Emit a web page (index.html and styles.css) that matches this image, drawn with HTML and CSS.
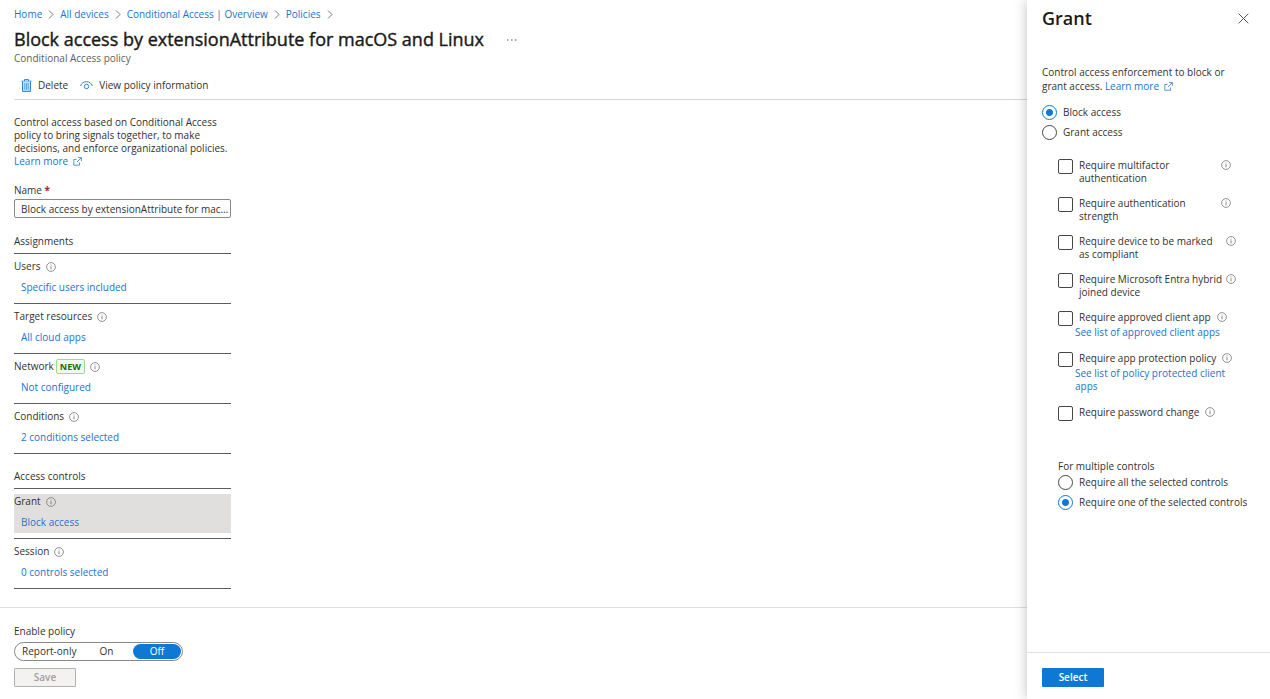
FILE: index.html
```html
<!DOCTYPE html>
<html lang="en">
<head>
<meta charset="utf-8">
<title>Block access by extensionAttribute for macOS and Linux</title>
<link rel="stylesheet" href="styles.css">
</head>
<body>
<svg class="sprite" aria-hidden="true">
  <symbol id="chevron" viewBox="0 0 6 9"><path d="M1 .5l4 4-4 4" fill="none" stroke="#777" stroke-width="1"/></symbol>
  <symbol id="info" viewBox="0 0 10 10"><circle cx="5" cy="5" r="4.4" fill="none" stroke="#777" stroke-width=".8"/><path d="M5 4.3v3M5 2.6v.9" stroke="#777" stroke-width=".9"/></symbol>
  <symbol id="external" viewBox="0 0 9 9"><path d="M3.500 2.500H.8v5.700H6.500V5.500M5 .6h3.400v3.400M8.400.6L4 5" fill="none" stroke="#2f7fd6" stroke-width=".8"/></symbol>
</svg>
<div class="page">
  <main class="main">
    <header class="header">
      <nav aria-label="Breadcrumb">
        <ol class="crumbs">
          <li><a href="#">Home</a><svg class="chevron"><use href="#chevron"/></svg></li>
          <li><a href="#">All devices</a><svg class="chevron"><use href="#chevron"/></svg></li>
          <li><a href="#">Conditional Access | Overview</a><svg class="chevron"><use href="#chevron"/></svg></li>
          <li><a href="#">Policies</a><svg class="chevron"><use href="#chevron"/></svg></li>
        </ol>
      </nav>
      <div class="title-row">
        <h1>Block access by extensionAttribute for macOS and Linux</h1>
        <button class="more" type="button" aria-label="More"><svg viewBox="0 0 10 2"><path d="M0 .5h1.500v1H0zM4 .5h1.500v1H4zM8 .5h1.500v1H8z" fill="#555"/></svg></button>
      </div>
      <p class="subtitle">Conditional Access policy</p>
      <div class="toolbar">
        <button type="button"><svg class="trash" viewBox="0 0 11 13"><path d="M.5 2.200h10M3.500 2V.6h4V2" fill="none" stroke="#2b84d6" stroke-width="1"/><path d="M1.500 2.500v9.900h8V2.500" fill="#c3e0f8" stroke="#2b84d6" stroke-width="1"/><path d="M3.800 4.200v6.500M5.500 4.200v6.500M7.200 4.200v6.500" stroke="#2b84d6" stroke-width=".7"/></svg>Delete</button>
        <button type="button"><svg class="eye" viewBox="0 0 13 9"><path d="M.6 5C1.500 2.200 3.800.7 6.500.7S11.500 2.200 12.400 5" fill="none" stroke="#2b84d6" stroke-width="1"/><circle cx="6.500" cy="5.500" r="2.200" fill="none" stroke="#2b84d6" stroke-width="1"/></svg>View policy information</button>
      </div>
    </header>

    <div class="content">
      <p class="intro">Control access based on Conditional Access policy to bring signals together, to make decisions, and enforce organizational policies. <a href="#">Learn more <svg class="external"><use href="#external"/></svg></a></p>
      <label class="field-label" for="policy-name">Name <span class="required">*</span></label>
      <input class="name-input" id="policy-name" type="text" value="Block access by extensionAttribute for macOS and Linux">

      <section class="group">
        <h2>Assignments</h2>
        <div class="item"><div class="item-label">Users <svg class="info"><use href="#info"/></svg></div><a href="#">Specific users included</a></div>
        <div class="item"><div class="item-label">Target resources <svg class="info"><use href="#info"/></svg></div><a href="#">All cloud apps</a></div>
        <div class="item"><div class="item-label">Network <span class="badge">NEW</span> <svg class="info"><use href="#info"/></svg></div><a href="#">Not configured</a></div>
        <div class="item"><div class="item-label">Conditions <svg class="info"><use href="#info"/></svg></div><a href="#">2 conditions selected</a></div>
      </section>
      <section class="group">
        <h2>Access controls</h2>
        <div class="item"><div class="selected"><div class="item-label">Grant <svg class="info"><use href="#info"/></svg></div><a href="#">Block access</a></div></div>
        <div class="item"><div class="item-label">Session <svg class="info"><use href="#info"/></svg></div><a href="#">0 controls selected</a></div>
      </section>
    </div>

    <footer class="footer">
      <fieldset class="policy">
        <legend>Enable policy</legend>
        <div class="segments">
          <label class="segment report"><input type="radio" name="policy"><span>Report-only</span></label>
          <label class="segment on"><input type="radio" name="policy"><span>On</span></label>
          <label class="segment off"><input type="radio" name="policy" checked><span>Off</span></label>
        </div>
      </fieldset>
      <button class="button save" type="button" disabled>Save</button>
    </footer>
  </main>

  <aside class="panel" aria-labelledby="panel-title">
    <header class="panel-header">
      <h2 id="panel-title">Grant</h2>
      <button class="close" type="button" aria-label="Close"><svg viewBox="0 0 11 11"><path d="M.7.7l9.600 9.600M10.300.7L.7 10.300" stroke="#555" stroke-width="1"/></svg></button>
    </header>
    <div class="panel-body">
      <p class="panel-intro">Control access enforcement to block or grant access. <a href="#">Learn more <svg class="external"><use href="#external"/></svg></a></p>
      <div class="radios">
        <label class="choice"><input type="radio" name="access" checked>Block access</label>
        <label class="choice"><input type="radio" name="access">Grant access</label>
      </div>
      <div class="checks">
        <div class="check"><input type="checkbox" id="c1"><label class="narrow" for="c1">Require multifactor authentication</label><svg class="info"><use href="#info"/></svg></div>
        <div class="check"><input type="checkbox" id="c2"><label class="narrow" for="c2">Require authentication strength</label><svg class="info"><use href="#info"/></svg></div>
        <div class="check"><input type="checkbox" id="c3"><label class="wide" for="c3">Require device to be marked as compliant</label><svg class="info"><use href="#info"/></svg></div>
        <div class="check"><input type="checkbox" id="c4"><label class="wide" for="c4">Require Microsoft Entra hybrid joined device</label><svg class="info"><use href="#info"/></svg></div>
        <div class="linked">
          <div class="check"><input type="checkbox" id="c5"><label for="c5">Require approved client app</label><svg class="info"><use href="#info"/></svg></div>
          <a class="list-link" href="#">See list of approved client apps</a>
        </div>
        <div class="linked">
          <div class="check"><input type="checkbox" id="c6"><label for="c6">Require app protection policy</label><svg class="info"><use href="#info"/></svg></div>
          <a class="list-link" href="#">See list of policy protected client apps</a>
        </div>
        <div class="check"><input type="checkbox" id="c7"><label for="c7">Require password change</label><svg class="info"><use href="#info"/></svg></div>
      </div>
      <fieldset class="multiple">
        <legend>For multiple controls</legend>
        <div class="radios">
          <label class="choice"><input type="radio" name="multi">Require all the selected controls</label>
          <label class="choice"><input type="radio" name="multi" checked>Require one of the selected controls</label>
        </div>
      </fieldset>
    </div>
    <footer class="panel-footer"><button class="button primary" type="button">Select</button></footer>
  </aside>
</div>
</body>
</html>
```

FILE: styles.css
```css
* { box-sizing: border-box; }
body {
  margin: 0;
  font: 10px/13px "Open Sans", "Noto Sans", sans-serif;
  color: #323130;
  background: #fff;
}
h1, h2, p, ol, fieldset, legend { margin: 0; padding: 0; border: 0; }
a { color: #1a73d1; text-decoration: none; }
button, input { font: inherit; color: inherit; margin: 0; }
button { border: 0; padding: 0; background: none; }
svg { flex: none; }
.sprite { position: absolute; width: 0; height: 0; }

.page { display: flex; min-height: 100vh; }
.main { flex: 1; min-width: 0; display: flex; flex-direction: column; }

.header { margin-left: 14px; padding-top: 6px; border-bottom: 1px solid #d8d8d8; }
.crumbs { display: flex; list-style: none; line-height: 16px; }
.crumbs li { display: flex; align-items: center; }
.chevron { width: 6px; height: 9px; margin: 0 6px; }
.title-row { display: flex; align-items: center; gap: 23px; margin-top: 5px; }
h1 { font-size: 18px; line-height: 25px; font-weight: 500; color: #1b1a19; -webkit-text-stroke: thin #1b1a19; -webkit-text-stroke-width: 0.4px; }
.more { display: flex; }
.more svg { width: 10px; height: 2px; }
.subtitle { color: #605e5c; line-height: 13px; }
.toolbar { display: flex; gap: 12px; padding: 11px 0 5px 7px; }
.toolbar button { display: flex; align-items: center; gap: 6px; line-height: 18px; }
.trash { width: 11px; height: 13px; }
.eye { width: 13px; height: 9px; }

.content { flex: 1; width: 231px; padding: 16px 0 18px 14px; }
.external { width: 9px; height: 9px; margin-left: 2px; vertical-align: -1px; }
.field-label { display: block; margin-top: 16px; }
.required { color: #a4262c; font-weight: 700; }
.name-input {
  display: block; width: 100%; height: 19px; margin-top: 2px; padding: 0 1px 0 6px;
  border: 1px solid #8a8886; border-radius: 2px; background: #fff; text-overflow: ellipsis;
}
.group { padding-top: 17px; }
.group + .group { padding-top: 16px; }
.group h2 { font-size: inherit; line-height: 13px; font-weight: 400; padding-bottom: 5px; border-bottom: 1px solid #605e5c; }
.item { padding: 5px 0; min-height: 50px; border-bottom: 1px solid #605e5c; }
.item-label { display: flex; align-items: center; gap: 5px; height: 15px; }
.item a { display: block; margin: 6px 0 0 7px; line-height: 15px; }
.selected { padding-bottom: 3px; background: #e1dfdd; }
.info { width: 10px; height: 10px; }
.badge {
  margin-left: -3px; padding: 0 3px; border: 1px solid #9fd89f; border-radius: 2px;
  background: #f1faf1; color: #0e700e; font-size: 9px; font-weight: 700;
}

.footer { padding: 16px 14px 12px; border-top: 1px solid #e1dfdd; }
.policy legend { line-height: 14px; }
.segments {
  display: inline-flex; align-items: center; height: 19px; margin-top: 4px; padding: 0 1px 0 7px;
  border: 1px solid #8a8886; border-radius: 10px; vertical-align: top;
}
.segment { display: flex; justify-content: center; line-height: 15px; border-radius: 8px; white-space: nowrap; }
.segment input { appearance: none; width: 0; height: 0; }
.report { width: 58px; justify-content: flex-start; }
.on { width: 53px; }
.off { width: 48px; }
.off:has(:checked) { background: #0f78d4; color: #fff; }
.button { display: block; width: 62px; height: 19px; border-radius: 1px; font-weight: 600; }
.save { margin-top: 7px; border: 1px solid #b3b0ad; background: #f3f2f1; color: #a19f9d; }
.primary { background: #0f78d4; color: #fff; }

.panel {
  width: 243px; display: flex; flex-direction: column; background: #fff;
  box-shadow: 0 0 12px rgba(0, 0, 0, .25);
}
.panel-header { display: flex; justify-content: space-between; align-items: center; padding: 6px 21px 0 15px; }
.panel-header h2 { font-size: 18px; line-height: 24px; font-weight: 600; color: #1b1a19; }
.close { display: flex; }
.close svg { width: 11px; height: 11px; }
.panel-body { flex: 1; padding: 35px 15px 0; }
.panel-intro { width: 200px; line-height: 14px; }
.panel input {
  flex: none; appearance: none; width: 15px; height: 15px; border: 1px solid #484644; background: #fff;
}
.panel input[type="checkbox"] { border-radius: 2px; }
.panel input[type="radio"] { border-radius: 50%; }
.panel input[type="radio"]:checked { border-color: #0f78d4; background: radial-gradient(circle, #0f78d4 3px, #fff 4px); }
.radios { display: flex; flex-direction: column; gap: 5px; margin-top: 12px; }
.choice { display: flex; align-items: center; gap: 6px; line-height: 15px; white-space: nowrap; }
.checks { display: flex; flex-direction: column; gap: 12px; margin: 19px 0 0 16px; }
.check { display: flex; align-items: flex-start; gap: 6px; }
.check input { margin-bottom: -2px; }
.check .info { margin-top: 1px; }
.narrow { width: 136px; }
.wide { width: 146px; margin-right: -5px; }
.linked { padding-bottom: 1px; }
.list-link { display: block; width: 155px; margin: 2px 0 0 17px; }
.multiple { margin: 41px 0 0 16px; }
.multiple .radios { margin-top: 2px; }
.panel-footer { padding: 15px 15px 12px; border-top: 1px solid #e1dfdd; }
```
